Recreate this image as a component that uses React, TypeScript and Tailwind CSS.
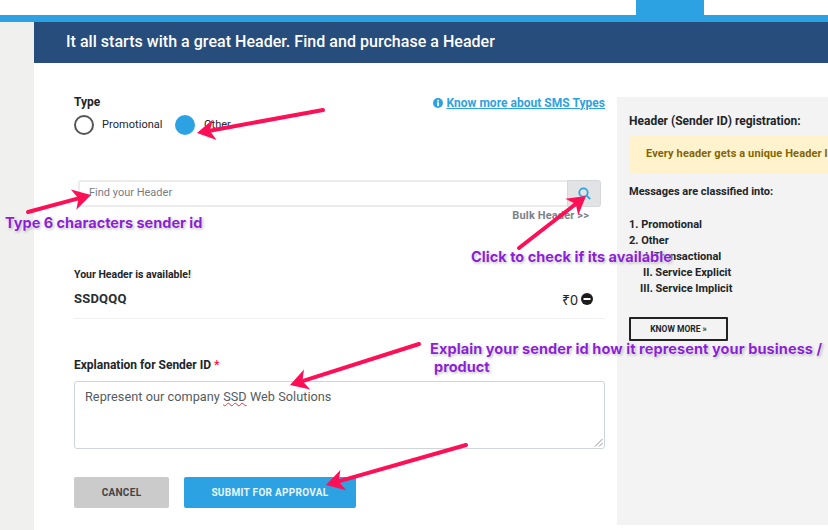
import React from "react";

const Arrow = ({ x1, y1, x2, y2 }: { x1: number; y1: number; x2: number; y2: number }) => {
  const a = Math.atan2(y2 - y1, x2 - x1);
  const L = 18, W = 10.5;
  const bx = x2 - L * Math.cos(a), by = y2 - L * Math.sin(a);
  const nx = -Math.sin(a), ny = Math.cos(a);
  const inner = 13;
  const ix = x2 - inner * Math.cos(a), iy = y2 - inner * Math.sin(a);
  return (
    <g>
      <line x1={x1} y1={y1} x2={ix} y2={iy} stroke="#ff0f55" strokeWidth="4" strokeLinecap="round" />
      <polygon
        fill="#ff0f55"
        points={`${x2},${y2} ${bx + nx * W},${by + ny * W} ${ix},${iy} ${bx - nx * W},${by - ny * W}`}
      />
    </g>
  );
};

const Note = ({ className, children }: { className: string; children: React.ReactNode }) => (
  <div
    className={`absolute whitespace-nowrap font-['Inter',sans-serif] font-bold text-[#8a1fd6] [text-shadow:0_0_2px_#fff,0_0_3px_#fff,1px_1px_3px_rgba(0,0,0,0.4)] ${className}`}
  >
    {children}
  </div>
);

export default function App() {
  return (
    <div className="relative w-[828px] h-[530px] overflow-hidden bg-white font-['Roboto',sans-serif] text-[#212529]">
      <div className="h-[15px] flex justify-end pr-[124px]">
        <div className="w-[68px] bg-[#2da2e2]" />
      </div>
      <div className="h-[7px] bg-[#2da2e2]" />
      <div className="flex h-[508px]">
        <div className="w-[34px] bg-[#f0f0ef]" />
        <div className="flex-1 flex flex-col">
          <div className="h-[41px] shrink-0 bg-[#264d7c] pl-[32px] pb-[2px] flex items-center text-white text-[16px] font-medium tracking-[0.03px]">
            It all starts with a great Header. Find and purchase a Header
          </div>
          <div className="flex pt-[34px]">
            <div className="w-[571px] shrink-0 pl-[40px]">
              <div className="flex justify-between items-center w-[531px] h-[11px]">
                <span className="text-[12px] font-bold -translate-y-[1px]">Type</span>
                <span className="flex items-center gap-[3px] text-[12px] font-bold text-[#2da2e2] tracking-[0.03px]">
                  <svg width="10" height="10" viewBox="0 0 10 10">
                    <circle cx="5" cy="5" r="5" fill="#2da2e2" />
                    <rect x="4.2" y="4.2" width="1.7" height="3.9" fill="#fff" />
                    <rect x="4.2" y="1.9" width="1.7" height="1.6" fill="#fff" />
                  </svg>
                  <span className="underline">Know more about SMS Types</span>
                </span>
              </div>
              <div className="flex items-center mt-[7px] h-[20px] text-[11px]">
                <span className="w-[20px] h-[20px] rounded-full border-2 border-[#555]" />
                <span className="ml-[8px] w-[73px] tracking-[0.05px]">Promotional</span>
                <span className="w-[20px] h-[20px] rounded-full bg-[#2da2e2]" />
                <span className="ml-[9px]">Other</span>
              </div>
              <div className="ml-[4px] mt-[45px] w-[523px] h-[27px] flex">
                <div className="flex-1 border-2 border-[#ececec] border-r-0 rounded-l-[3px] pl-[9px] flex items-center text-[11px] text-[#777d85]">
                  Find your Header
                </div>
                <div className="w-[34px] bg-[#e1e3e5] border border-[#d5d7da] rounded-r-[3px] flex items-center justify-center">
                  <svg width="13" height="13" viewBox="0 0 13 13" fill="none" stroke="#2da2e2" strokeWidth="1.8">
                    <circle cx="5.5" cy="5.5" r="4.2" />
                    <line x1="8.6" y1="8.6" x2="12.2" y2="12.2" />
                  </svg>
                </div>
              </div>
              <div className="w-[515px] mt-[3px] h-[12px] flex items-center justify-end text-[11px] font-bold tracking-[0.15px] text-[#7b828a]">
                Bulk Header &gt;&gt;
              </div>
              <div className="mt-[47px] h-[12px] flex items-center text-[10.5px] font-bold">Your Header is available!</div>
              <div className="flex items-center justify-between w-[519px] mt-[11px] h-[14px]">
                <span className="text-[13px] font-bold tracking-[0.2px] text-[#2a2d30]">SSDQQQ</span>
                <span className="flex items-center gap-[3px] text-[14px]">
                  <span className="font-['Noto_Sans','DejaVu_Sans',sans-serif]">₹0</span>
                  <svg width="12" height="12" viewBox="0 0 12 12">
                    <circle cx="6" cy="6" r="6" fill="#1c1c1c" />
                    <rect x="2.5" y="5" width="7" height="2" fill="#fff" />
                  </svg>
                </span>
              </div>
              <div className="w-[531px] mt-[12px] border-t border-[#efefef]" />
              <div className="mt-[39px] h-[14px] flex items-center text-[12px] font-bold">
                Explanation for Sender ID<span className="ml-[3px] text-[#ff1050]">*</span>
              </div>
              <div className="relative mt-[9px] w-[531px] h-[68px] border border-[#ced4da] rounded-[3px] px-[10px] py-[6px] text-[12.7px] leading-[17px] tracking-[0.05px] text-[#555b61]">
                Represent our company{" "}
                <span className="underline decoration-wavy decoration-[#e03a3a] decoration-[0.5px]">SSD</span> Web Solutions
                <svg className="absolute right-[1px] bottom-[1px]" width="9" height="9" viewBox="0 0 9 9" stroke="#777" strokeWidth="0.8">
                  <line x1="1" y1="8.5" x2="8.5" y2="1" />
                  <line x1="5" y1="8.5" x2="8.5" y2="5" />
                </svg>
              </div>
              <div className="flex gap-[15px] mt-[28px]">
                <div className="w-[95px] h-[31px] bg-[#cbcbcb] rounded-[2px] flex items-center justify-center text-[10px] font-bold tracking-[0.3px] text-[#444]">
                  CANCEL
                </div>
                <div className="w-[172px] h-[31px] bg-[#2da2e2] rounded-[2px] flex items-center justify-center text-[10px] font-bold tracking-[0.3px] text-[#e8f5fc]">
                  SUBMIT FOR APPROVAL
                </div>
              </div>
            </div>
            <div className="w-[12px] shrink-0" />
            <div className="w-[211px] h-[428px] shrink-0 bg-[#f3f3f3] pl-[12px] pt-[17px] overflow-hidden">
              <div className="text-[12px] font-bold leading-[14px]">Header (Sender ID) registration:</div>
              <div className="mt-[7px] h-[38px] w-[230px] bg-[#fff3cd] rounded-[3px] pl-[17px] flex items-center whitespace-nowrap text-[11px] font-bold tracking-[0.12px] text-[#856404]">
                Every header gets a unique Header limit
              </div>
              <div className="mt-[12px] h-[14px] flex items-center text-[11px] font-bold">Messages are classified into:</div>
              <div className="mt-[18px] text-[11px] font-bold leading-[16px]">
                <div>1. Promotional</div>
                <div>2. Other</div>
                <div className="pl-[16px]">I. Transactional</div>
                <div className="pl-[14px]">II. Service Explicit</div>
                <div className="pl-[11px]">III. Service Implicit</div>
              </div>
              <div className="mt-[20px] w-[99px] h-[24px] border-2 border-[#222] rounded-[1px] flex items-center justify-center text-[8.5px] font-bold">
                KNOW MORE »
              </div>
            </div>
          </div>
        </div>
      </div>

      <svg className="absolute left-0 top-0 pointer-events-none" width="828" height="530">
        <Arrow x1={323} y1={110} x2={197} y2={133} />
        <Arrow x1={28} y1={212} x2={91} y2={195} />
        <Arrow x1={519} y1={248} x2={586} y2={196} />
        <Arrow x1={419} y1={344} x2={290} y2={385} />
        <Arrow x1={466} y1={445} x2={326} y2={485} />
      </svg>
      <Note className="left-[5px] top-[214px] text-[14.5px] leading-[18px]">Type 6 characters sender id</Note>
      <Note className="left-[471px] top-[248px] text-[14.5px] leading-[18px] tracking-[0.03px]">Click to check if its available</Note>
      <Note className="left-[430px] top-[340px] text-[14.5px] leading-[18px] tracking-[0.09px]">
        Explain your sender id how it represent your business /
      </Note>
      <Note className="left-[434px] top-[358px] text-[14.5px] leading-[18px]">product</Note>
    </div>
  );
}
